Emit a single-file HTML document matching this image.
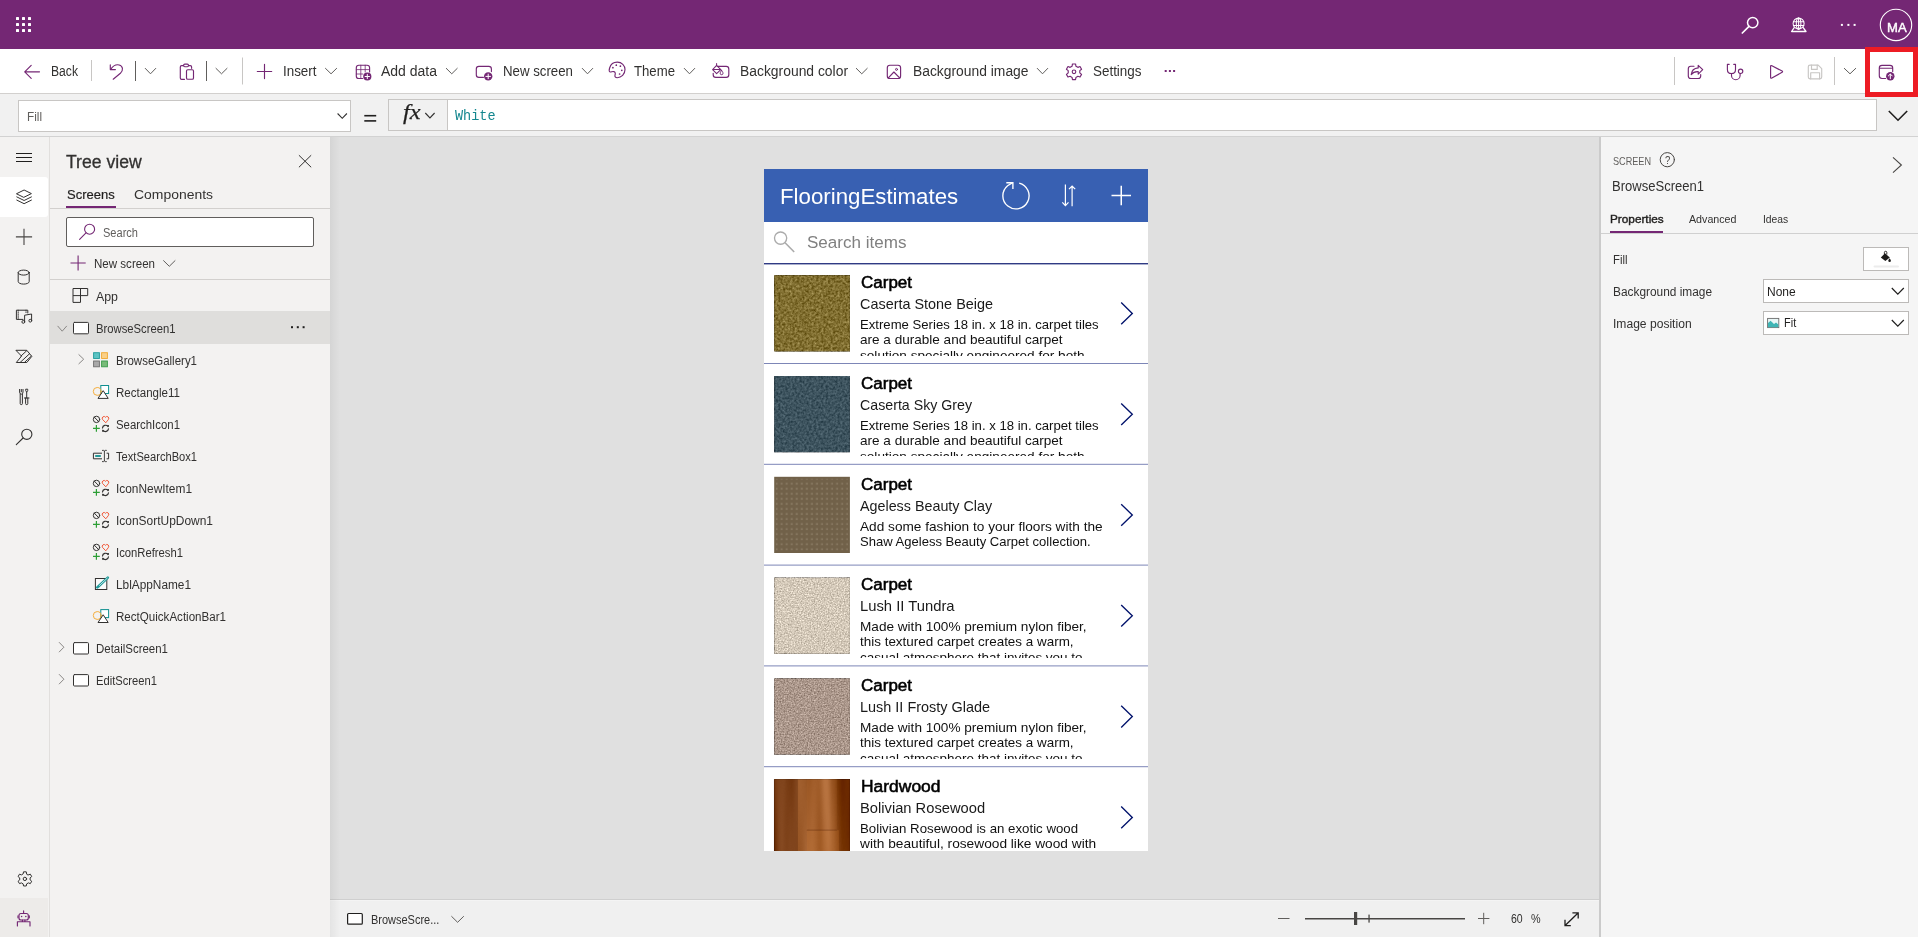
<!DOCTYPE html>
<html><head><meta charset="utf-8"><title>Power Apps</title>
<style>
html,body{margin:0;padding:0;}
body{width:1918px;height:937px;overflow:hidden;position:relative;background:#f3f2f1;font-family:"Liberation Sans",sans-serif;}
.a{position:absolute;}
.t{position:absolute;white-space:pre;transform-origin:0 0;}
svg{position:absolute;overflow:visible;}
.ic{fill:none;stroke:#742774;stroke-width:1.1;stroke-linecap:round;stroke-linejoin:round;}
.dk{fill:none;stroke:#323130;stroke-width:1.1;stroke-linecap:round;stroke-linejoin:round;}
.wh{fill:none;stroke:#fff;stroke-width:1.4;stroke-linecap:round;stroke-linejoin:round;}

</style></head>
<body>
<!-- ===== top purple bar ===== -->
<div class="a" style="left:0;top:0;width:1918px;height:49px;background:#742774"></div>
<!-- ===== command bar ===== -->
<div class="a" style="left:0;top:49px;width:1918px;height:44px;background:#fff"></div>
<div class="a" style="left:0;top:93px;width:1918px;height:1px;background:#d2d0ce"></div>
<!-- ===== formula bar ===== -->
<div class="a" style="left:0;top:94px;width:1918px;height:42px;background:#f1f1f1"></div>
<div class="a" style="left:0;top:136px;width:1918px;height:1px;background:#d2d2d2"></div>
<div class="a" style="left:18px;top:100px;width:331px;height:30px;background:#fff;border:1px solid #c8c6c4"></div>
<div class="a" style="left:388px;top:99px;width:1487px;height:30px;background:#fff;border:1px solid #c8c6c4"></div>
<div class="a" style="left:389px;top:100px;width:58px;height:30px;background:#f1f1f1;border-right:1px solid #c8c6c4"></div>
<!-- ===== left rail ===== -->
<div class="a" style="left:0;top:137px;width:49px;height:800px;background:#f3f2f1"></div>
<div class="a" style="left:49px;top:137px;width:1px;height:800px;background:#e1dfdd"></div>
<div class="a" style="left:0;top:177px;width:48px;height:40px;background:#fff;border-radius:0 3px 3px 0"></div>
<div class="a" style="left:0;top:898px;width:48px;height:39px;background:#edebe9"></div>
<!-- ===== tree view ===== -->
<div class="a" style="left:50px;top:137px;width:280px;height:800px;background:#f3f2f1"></div>
<div class="a" style="left:50px;top:208px;width:280px;height:1px;background:#d2d0ce"></div>
<div class="a" style="left:66px;top:206px;width:50px;height:2px;background:#742774"></div>
<div class="a" style="left:66px;top:217px;width:246px;height:28px;background:#fff;border:1px solid #605e5c;border-radius:2px"></div>
<div class="a" style="left:50px;top:279px;width:280px;height:1px;background:#d2d0ce"></div>
<div class="a" style="left:50px;top:311px;width:280px;height:33px;background:#dfdedc"></div>
<!-- ===== canvas ===== -->
<div class="a" style="left:330px;top:137px;width:1270px;height:762px;background:#e0e0e0"></div>

<div class="a" style="left:330px;top:899px;width:1270px;height:38px;background:#f0f0f0"></div>
<div class="a" style="left:330px;top:899px;width:1270px;height:1px;background:#cfcfcf"></div><div class="a" style="left:330px;top:900px;width:1270px;height:1px;background:#f4f4f4"></div>
<div class="a" style="left:330px;top:137px;width:10px;height:800px;background:linear-gradient(to right,rgba(0,0,0,.05),rgba(0,0,0,0))"></div>
<!-- ===== right panel ===== -->
<div class="a" style="left:1600px;top:137px;width:318px;height:800px;background:#f5f5f5"></div>
<div class="a" style="left:1599px;top:137px;width:2px;height:800px;background:#cbcbcb"></div>
<div class="a" style="left:1601px;top:233px;width:317px;height:1px;background:#d0d0d0"></div>
<div class="a" style="left:1610px;top:231px;width:53px;height:2px;background:#742774"></div>
<div class="a" style="left:1863px;top:247px;width:44px;height:22px;background:#fff;border:1px solid #bcbab8"></div>
<div class="a" style="left:1763px;top:279px;width:144px;height:22px;background:#fff;border:1px solid #bcbab8"></div>
<div class="a" style="left:1763px;top:311px;width:144px;height:22px;background:#fff;border:1px solid #bcbab8"></div>
<!-- ===== red highlight box ===== -->
<div class="a" style="left:1865px;top:47px;width:43px;height:40px;border:5px solid #ed1c24;border-right-width:5px"></div>
<!-- ===== app canvas ===== -->
<div class="a" style="left:764px;top:169px;width:384px;height:682px;background:#fff"></div>
<div class="a" style="left:764px;top:169px;width:384px;height:53px;background:#3860b2"></div>
<svg width="0" height="0" style="left:0;top:0">
<defs>
<filter id="nz1" x="0" y="0" width="100%" height="100%" color-interpolation-filters="sRGB"><feTurbulence type="fractalNoise" baseFrequency="0.42" numOctaves="2" seed="4"/><feColorMatrix type="matrix" values="1 0 0 0 0  1 0 0 0 0  1 0 0 0 0  0 0 0 0 1" result="n"/><feComposite in="SourceGraphic" in2="n" operator="arithmetic" k1="0" k2="1" k3="0.48" k4="-0.24"/></filter>
<filter id="nz2" x="0" y="0" width="100%" height="100%" color-interpolation-filters="sRGB"><feTurbulence type="fractalNoise" baseFrequency="0.42" numOctaves="2" seed="9"/><feColorMatrix type="matrix" values="1 0 0 0 0  1 0 0 0 0  1 0 0 0 0  0 0 0 0 1" result="n"/><feComposite in="SourceGraphic" in2="n" operator="arithmetic" k1="0" k2="1" k3="0.32" k4="-0.16"/></filter>
<filter id="nz4" x="0" y="0" width="100%" height="100%" color-interpolation-filters="sRGB"><feTurbulence type="fractalNoise" baseFrequency="0.7" numOctaves="2" seed="2"/><feColorMatrix type="matrix" values="1 0 0 0 0  1 0 0 0 0  1 0 0 0 0  0 0 0 0 1" result="n"/><feComposite in="SourceGraphic" in2="n" operator="arithmetic" k1="0" k2="1" k3="0.5" k4="-0.25"/></filter>
<filter id="nz6" x="0" y="0" width="100%" height="100%" color-interpolation-filters="sRGB"><feTurbulence type="fractalNoise" baseFrequency="0.06 0.003" numOctaves="2" seed="11"/><feColorMatrix type="matrix" values="1 0 0 0 0  1 0 0 0 0  1 0 0 0 0  0 0 0 0 1" result="n"/><feComposite in="SourceGraphic" in2="n" operator="arithmetic" k1="0" k2="1" k3="0.55" k4="-0.275"/></filter>
<pattern id="dots" x="1.5" y="1.5" width="5.05" height="5.05" patternUnits="userSpaceOnUse"><rect x="1.4" y="1.4" width="2" height="2" fill="#8a7b63" opacity=".8"/></pattern>
</defs></svg>
<svg width="1918" height="937" viewBox="0 0 1918 937" style="left:0;top:0">
<rect x="774.2" y="275.20" width="75.7" height="76.20" fill="#806e30" filter="url(#nz1)"/>
<path d="M1121.2 302.60 L1132.3 313.40 L1121.2 324.20" fill="none" stroke="#00126b" stroke-width="1.35"/>
<rect x="774.2" y="376.00" width="75.7" height="76.20" fill="#3d535e" filter="url(#nz2)"/>
<path d="M1121.2 403.40 L1132.3 414.20 L1121.2 425.00" fill="none" stroke="#00126b" stroke-width="1.35"/>
<rect x="774.2" y="476.80" width="75.7" height="76.20" fill="#716149"/>
<rect x="775.9" y="478.80" width="72" height="72" fill="url(#dots)"/>
<path d="M1121.2 504.20 L1132.3 515.00 L1121.2 525.80" fill="none" stroke="#00126b" stroke-width="1.35"/>
<rect x="774.2" y="577.60" width="75.7" height="76.20" fill="#d4c9b9" filter="url(#nz4)"/>
<path d="M1121.2 605.00 L1132.3 615.80 L1121.2 626.60" fill="none" stroke="#00126b" stroke-width="1.35"/>
<rect x="774.2" y="678.40" width="75.7" height="76.20" fill="#ab978b" filter="url(#nz4)"/>
<path d="M1121.2 705.80 L1132.3 716.60 L1121.2 727.40" fill="none" stroke="#00126b" stroke-width="1.35"/>
<rect x="774.2" y="779.20" width="75.7" height="71.80" fill="#82400f" filter="url(#nz6)"/>
<g transform="translate(773.9 779.20)"><rect x="0" y="0" width="24" height="71.80" fill="#4a1c06" opacity=".30"/><rect x="33" y="0" width="30" height="51" fill="#b8682a" opacity=".18"/><rect x="33" y="51" width="32" height="20.80" fill="#c07030" opacity=".3"/><rect x="33" y="50.5" width="30" height="0.8" fill="#5a2408" opacity=".5"/></g>
<path d="M1121.2 806.60 L1132.3 817.40 L1121.2 828.20" fill="none" stroke="#00126b" stroke-width="1.35"/>
</svg>
<svg width="1918" height="937" viewBox="0 0 1918 937" style="left:0;top:0" fill="none" stroke="#fff" stroke-linecap="butt" stroke-linejoin="miter">
<path d="M1019.2 183.1 A13.1 13.1 0 1 1 1007.6 185.7 L1012.6 182.7" stroke-width="1.35"/><path d="M1006.3 182.7 H1012.9 V189" stroke-width="1.35"/>
<path d="M1065.4 184.5 V205.4 M1062.3 202.4 L1065.4 205.6 L1068.5 202.4" stroke-width="1.2"/><path d="M1072.1 206.2 V186 M1069 189.2 L1072.1 186 L1075.2 189.2" stroke-width="1.2"/>
<path d="M1121.25 185.8 V205.3 M1111.5 195.6 H1131" stroke-width="1.5"/>
</svg>
<svg width="1918" height="937" viewBox="0 0 1918 937" style="left:0;top:0" fill="none"><circle cx="780.6" cy="238.1" r="6.1" stroke="#ababab" stroke-width="1.35"/><path d="M785.1 242.7 L794.2 252" stroke="#ababab" stroke-width="1.6"/><rect x="764" y="263.15" width="384" height="1.2" fill="#0d1a70"/></svg><!-- ===== icon layer (absolute page coordinates) ===== -->
<svg width="1918" height="937" viewBox="0 0 1918 937" style="left:0;top:0" fill="none" stroke-linecap="round" stroke-linejoin="round">
<rect x="16" y="17" width="3" height="3" rx=".6" fill="#fff"/>
<rect x="22" y="17" width="3" height="3" rx=".6" fill="#fff"/>
<rect x="28" y="17" width="3" height="3" rx=".6" fill="#fff"/>
<rect x="16" y="23" width="3" height="3" rx=".6" fill="#fff"/>
<rect x="22" y="23" width="3" height="3" rx=".6" fill="#fff"/>
<rect x="28" y="23" width="3" height="3" rx=".6" fill="#fff"/>
<rect x="16" y="29" width="3" height="3" rx=".6" fill="#fff"/>
<rect x="22" y="29" width="3" height="3" rx=".6" fill="#fff"/>
<rect x="28" y="29" width="3" height="3" rx=".6" fill="#fff"/>
<circle cx="1752.7" cy="22.6" r="5.2" stroke="#fff" stroke-width="1.5"/><path d="M1749 26.4 L1742.3 33" stroke="#fff" stroke-width="1.7"/>
<g stroke="#fff" stroke-width="1.05"><circle cx="1798.6" cy="23.6" r="5.5"/><ellipse cx="1798.6" cy="23.6" rx="2.3" ry="5.5"/><path d="M1793.4 21.7 H1803.8 M1793.4 25.5 H1803.8 M1798.6 18.1 V29.1"/><path d="M1794.2 27.7 L1791.6 31.5 H1806 L1803.2 27.7" stroke-width="1.3"/></g>
<rect x="1840.9" y="23.9" width="2" height="2" fill="#fff"/>
<rect x="1847.4" y="23.9" width="2" height="2" fill="#fff"/>
<rect x="1853.6" y="23.9" width="2" height="2" fill="#fff"/>
<circle cx="1896" cy="24.9" r="15.7" stroke="#fff" stroke-width="1.1"/>
<g stroke="#742774" stroke-width="1.15">
<path d="M39.5 71.8 H24.8 M31.2 65.4 L24.7 71.8 L31.2 78.3"/>
<path d="M110.3 64.9 V69.6 H115.4"/><path d="M110.6 69.4 C112.8 66.2 116 64.2 119.2 65 C123 66 123.6 70.4 120.4 73.2 L113.2 79.2"/>
<path d="M183.4 65.6 H181.6 Q180.3 65.6 180.3 66.9 V78 Q180.3 79.3 181.6 79.3 H184.5 M188.6 65.6 H190.3 Q191.6 65.6 191.6 66.9 V68.3"/><rect x="183.6" y="64.2" width="4.9" height="2.5" rx="1.2"/><rect x="186.5" y="69.7" width="7" height="9.6" rx="1.3"/>
<path d="M264.5 64.3 V78.6 M257.3 71.45 H271.7"/>
<path d="M369.6 72 V67.8 Q369.6 65.2 367 65.2 H358.9 Q356.3 65.2 356.3 67.8 V75.9 Q356.3 78.5 358.9 78.5 H362.6"/><path d="M356.3 69.6 H369.6 M356.3 74 H362.8 M360.8 65.2 V78.5 M365.2 65.2 V72" stroke-width=".8"/>
<circle cx="367.3" cy="76.5" r="4.1" fill="#742774" stroke="none"/><path d="M367.3 74.3 V78.7 M365.1 76.5 H369.5" stroke="#fff" stroke-width="1"/>
<path d="M483.4 77.4 H478.9 Q476.3 77.4 476.3 74.8 V68.9 Q476.3 66.3 478.9 66.3 H488.8 Q491.4 66.3 491.4 68.9 V71.6"/>
<circle cx="488.2" cy="76.4" r="4.2" fill="#742774" stroke="none"/><path d="M488.2 74.1 V78.7 M485.9 76.4 H490.5" stroke="#fff" stroke-width="1"/>
<path d="M617.3 62.1 C621.8 62.1 625 65.6 625 69.6 C625 74.4 621.3 77.7 617.2 77.7 C615.3 77.7 614.6 76.4 615 75.2 C615.6 73.4 615.3 72 613.8 71.6 C612.3 71.2 611.2 72.3 610.2 72 C609 71.6 609.2 69.3 609.6 68 C610.6 64.6 613.6 62.1 617.3 62.1 Z"/>
<circle cx="612.9" cy="67.7" r=".85" fill="#742774" stroke="none"/>
<circle cx="616.3" cy="65.2" r=".85" fill="#742774" stroke="none"/>
<circle cx="620.4" cy="66.2" r=".85" fill="#742774" stroke="none"/>
<circle cx="621.8" cy="70.3" r=".85" fill="#742774" stroke="none"/>
<circle cx="619.6" cy="74" r=".85" fill="#742774" stroke="none"/>
<path d="M717.5 66.3 H726.2 Q728.8 66.3 728.8 68.9 V74.8 Q728.8 77.4 726.2 77.4 H715.8 Q713.2 77.4 713.2 74.8 V73.2"/>
<path d="M716.6 63.4 V66 M712.6 69.6 L716.6 65.3 L720.8 69.6 L716.6 73.6 Z M712.8 69.4 H720.6" stroke-width="1.05"/><path d="M721.6 70.4 C722.8 72 723 72.7 723 73.3 A1.4 1.4 0 0 1 720.2 73.3 C720.2 72.7 720.5 72 721.6 70.4 Z" stroke-width="1"/>
<rect x="887.3" y="65.2" width="13.3" height="13.3" rx="2.6"/><path d="M888.6 77.6 L893.9 72 L899.4 77.6"/><circle cx="896.5" cy="69.4" r="1" stroke-width="1"/>
</g>
<path d="M1075.92 66.22 L1075.53 63.95 L1072.47 63.95 L1072.08 66.22 L1070.13 67.35 L1067.96 66.55 L1066.44 69.20 L1068.21 70.67 L1068.21 72.93 L1066.44 74.40 L1067.96 77.05 L1070.13 76.25 L1072.08 77.38 L1072.47 79.65 L1075.53 79.65 L1075.92 77.38 L1077.87 76.25 L1080.04 77.05 L1081.56 74.40 L1079.79 72.93 L1079.79 70.67 L1081.56 69.20 L1080.04 66.55 L1077.87 67.35 Z" stroke="#742774" stroke-width="1.15"/><circle cx="1074" cy="71.8" r="1.8" stroke="#742774" stroke-width="1.15"/>
<rect x="1164.7" y="70" width="2" height="2" fill="#742774"/>
<rect x="1168.9" y="70" width="2" height="2" fill="#742774"/>
<rect x="1173.1" y="70" width="2" height="2" fill="#742774"/>
<g stroke="#742774" stroke-width="1.15">
<path d="M1694 66.2 H1690.8 Q1688.3 66.2 1688.3 68.7 V76 Q1688.3 78.5 1690.8 78.5 H1698.2 Q1700.7 78.5 1700.7 76 V74.6"/><path d="M1698.2 65.4 L1702.7 69.7 L1698.2 74.1 V71.6 C1695 71.4 1692.8 72.4 1691.2 74.6 C1691.6 70.8 1694 68.2 1698.2 67.9 Z"/>
<path d="M1729.2 64.3 H1727.4 V69.4 Q1727.4 73.5 1731.5 73.5 Q1735.5 73.5 1735.5 69.4 V64.3 H1733.7"/><path d="M1731.5 73.5 V75.4 A4.3 4.3 0 0 0 1740.1 75.4 V73.6"/><circle cx="1740.6" cy="71.3" r="2.2"/>
<path d="M1770.6 66.3 Q1770.6 65 1771.9 65.7 L1782.1 71.1 Q1783.1 71.7 1782.1 72.3 L1771.9 78 Q1770.6 78.7 1770.6 77.4 Z"/>
</g>
<g stroke="#c8c6c4" stroke-width="1.15"><path d="M1810 65.1 H1818.2 L1821.7 68.6 V77.1 Q1821.7 78.8 1820 78.8 H1810 Q1808.3 78.8 1808.3 77.1 V66.8 Q1808.3 65.1 1810 65.1 Z"/><path d="M1811.5 65.1 V69.4 H1817.2 V65.1 M1810.7 78.8 V72.7 H1819.6 V78.8"/></g>
<g stroke="#742774" stroke-width="1.15"><path d="M1885.6 78.5 H1882 Q1879.3 78.5 1879.3 75.8 V68 Q1879.3 65.3 1882 65.3 H1890 Q1892.7 65.3 1892.7 68 V71.4 M1879.3 68.2 H1892.7"/></g>
<circle cx="1890.3" cy="76.3" r="4.2" fill="#742774"/><path d="M1890.3 78.7 V74.2 M1888.3 76 L1890.3 74 L1892.3 76" stroke="#fff" stroke-width="1"/>
<path d="M91.5 60 V81" stroke="#c8c6c4" stroke-width="1" stroke-linecap="butt"/>
<path d="M135.5 61 V81" stroke="#605e5c" stroke-width="1" stroke-linecap="butt"/>
<path d="M206.5 61 V81" stroke="#605e5c" stroke-width="1" stroke-linecap="butt"/>
<path d="M242.5 57.5 V84.5" stroke="#c8c6c4" stroke-width="1" stroke-linecap="butt"/>
<path d="M1674.5 57 V85" stroke="#c8c6c4" stroke-width="1" stroke-linecap="butt"/>
<path d="M1834.5 57 V85" stroke="#c8c6c4" stroke-width="1" stroke-linecap="butt"/>
<path d="M145 68.1 L150.5 73.8 L156 68.1" stroke="#605e5c" stroke-width="1.0" stroke-linecap="butt" stroke-linejoin="miter"/>
<path d="M215.7 68.1 L221.5 73.8 L227.3 68.1" stroke="#605e5c" stroke-width="1.0" stroke-linecap="butt" stroke-linejoin="miter"/>
<path d="M325.2 68.1 L331.04999999999995 73.8 L336.9 68.1" stroke="#605e5c" stroke-width="1.0" stroke-linecap="butt" stroke-linejoin="miter"/>
<path d="M446 68.1 L451.75 73.8 L457.5 68.1" stroke="#605e5c" stroke-width="1.0" stroke-linecap="butt" stroke-linejoin="miter"/>
<path d="M582 68.1 L587.5 73.8 L593 68.1" stroke="#605e5c" stroke-width="1.0" stroke-linecap="butt" stroke-linejoin="miter"/>
<path d="M684 68.1 L689.5 73.8 L695 68.1" stroke="#605e5c" stroke-width="1.0" stroke-linecap="butt" stroke-linejoin="miter"/>
<path d="M856 68.1 L861.75 73.8 L867.5 68.1" stroke="#605e5c" stroke-width="1.0" stroke-linecap="butt" stroke-linejoin="miter"/>
<path d="M1037 68.1 L1042.5 73.8 L1048 68.1" stroke="#605e5c" stroke-width="1.0" stroke-linecap="butt" stroke-linejoin="miter"/>
<path d="M1844 68.1 L1850.0 73.8 L1856 68.1" stroke="#605e5c" stroke-width="1.0" stroke-linecap="butt" stroke-linejoin="miter"/>
<path d="M337.6 113.5 L342.25 118.3 L346.9 113.5" stroke="#323130" stroke-width="1.1" stroke-linecap="butt" stroke-linejoin="miter"/>
<rect x="364.3" y="114.9" width="11.9" height="1.6" fill="#201f1e"/><rect x="364.3" y="120.1" width="11.9" height="1.6" fill="#201f1e"/>
<path d="M425.3 113 L429.95000000000005 117.9 L434.6 113" stroke="#323130" stroke-width="1.1" stroke-linecap="butt" stroke-linejoin="miter"/>
<path d="M1888.8 111 L1898.0 120.2 L1907.2 111" stroke="#201f1e" stroke-width="1.6" stroke-linecap="butt" stroke-linejoin="miter"/>
<g stroke="#201f1e" stroke-width="1" stroke-linecap="butt"><path d="M16 153.5 H32 M16 157.5 H32 M16 161.5 H32"/></g>
<g stroke="#323130" stroke-width="1"><path d="M16.8 193.6 L24.1 190 L31.4 193.6 L24.1 197.2 Z M16.8 196.9 L24.1 200.5 L31.4 196.9 M16.8 200.1 L24.1 203.7 L31.4 200.1"/></g>
<path d="M24 228.8 V245 M15.9 236.9 H32.1" stroke="#484644" stroke-width="1.1" stroke-linecap="butt"/>
<g stroke="#323130" stroke-width="1"><ellipse cx="23.7" cy="272.6" rx="5.5" ry="2.5"/><path d="M18.2 272.6 V281.6 A5.5 2.5 0 0 0 29.2 281.6 V272.6"/></g>
<g stroke="#323130" stroke-width="1"><path d="M23 319.4 H16.4 V310.2 H27.8 V313"/><path d="M18.2 310.2 V319.4 M26 310.2 V312.6" stroke-dasharray="1 1.1" stroke-width=".9"/><path d="M24.6 321.6 V315.2 L31.6 314 V320.4"/><circle cx="23.3" cy="321.9" r="1.4"/><circle cx="30.3" cy="320.7" r="1.4"/></g>
<g stroke="#323130" stroke-width="1"><path d="M16.3 350.3 H26.8 L31.8 356.4 L26.8 362.5 H16.3 L21.3 356.4 Z"/><path d="M20.3 362.3 L29.7 353.6 M24.6 362.3 L31.2 356.2 M21 356 L26.6 350.8"/></g>
<g stroke="#323130" stroke-width="1"><path d="M20.2 394.2 V403.6 Q20.2 404.6 21.3 404.6 Q22.4 404.6 22.4 403.6 V394.2"/><path d="M19.6 389.4 V392 Q19.6 394.2 21.3 394.2 Q23 394.2 23 392 V389.4 M21.3 389.4 V391.8"/><path d="M25.6 398 V403.6 Q25.6 404.6 26.7 404.6 Q27.8 404.6 27.8 403.6 V398 M24.4 398 H29 M26.7 398 V392.2 L25.7 390.6 V389.2 H27.7 V390.6 L26.7 392.2"/></g>
<circle cx="26.8" cy="434.3" r="5.1" stroke="#323130" stroke-width="1.1"/><path d="M23.1 438 L16.3 444.7" stroke="#323130" stroke-width="1.1"/>
<path d="M26.63 873.89 L26.27 871.83 L23.53 871.83 L23.17 873.89 L21.42 874.90 L19.47 874.18 L18.09 876.56 L19.70 877.89 L19.70 879.91 L18.09 881.24 L19.47 883.62 L21.42 882.90 L23.17 883.91 L23.53 885.97 L26.27 885.97 L26.63 883.91 L28.38 882.90 L30.33 883.62 L31.71 881.24 L30.10 879.91 L30.10 877.89 L31.71 876.56 L30.33 874.18 L28.38 874.90 Z" stroke="#323130" stroke-width="1.0"/><circle cx="24.9" cy="878.9" r="1.7" stroke="#323130" stroke-width="1.0"/>
<g stroke="#742774" stroke-width="1.15"><path d="M23.6 910.9 V913.4"/><rect x="19" y="913.5" width="9.3" height="6.5" rx="2"/><path d="M18 915.8 V917.8 M29.3 915.8 V917.8 M22.4 920 V921.6 M24.9 920 V921.6 M17.4 926 V921.7 H30 V926"/></g><circle cx="21.6" cy="916.6" r=".75" fill="#742774"/><circle cx="25.8" cy="916.6" r=".75" fill="#742774"/>
<path d="M299.2 155.5 L310.9 167 M310.9 155.5 L299.2 167" stroke="#323130" stroke-width="1.0"/>
<circle cx="89.6" cy="229.2" r="5" stroke="#742774" stroke-width="1.1"/><path d="M86 232.9 L79.6 239.4" stroke="#742774" stroke-width="1.1"/>
<path d="M78.1 255.4 V270.6 M70.5 263 H85.7" stroke="#742774" stroke-width="1.1" stroke-linecap="butt"/>
<path d="M163.3 260.4 L169.3 266.3 L175.3 260.4" stroke="#605e5c" stroke-width="1.0" stroke-linecap="butt" stroke-linejoin="miter"/>
<path d="M73.4 288.5 H87.7 V295.6 H80.5 V302.4 H73.4 Z M80.5 288.5 V295.6 M73.4 295.6 H80.5" stroke="#323130" stroke-width="1" stroke-linejoin="miter"/>
<rect x="73.5" y="322.4" width="15" height="11.4" rx="1" fill="#fff" stroke="#323130" stroke-width="1"/>
<path d="M57.6 325.9 L62.2 331.2 L66.8 325.9" stroke="#8a8886" stroke-width="1.0" stroke-linecap="butt" stroke-linejoin="miter"/>
<rect x="73.5" y="642.6" width="15" height="11.4" rx="1" fill="#fff" stroke="#323130" stroke-width="1"/>
<path d="M59 642.2 L63.9 647.2 L59 652.2" stroke="#8a8886" stroke-width="1" stroke-linecap="butt" stroke-linejoin="miter"/>
<rect x="73.5" y="674.6" width="15" height="11.4" rx="1" fill="#fff" stroke="#323130" stroke-width="1"/>
<path d="M59 674.2 L63.9 679.2 L59 684.2" stroke="#8a8886" stroke-width="1" stroke-linecap="butt" stroke-linejoin="miter"/>
<rect x="291" y="326.2" width="2" height="2" fill="#201f1e"/>
<rect x="296.8" y="326.2" width="2" height="2" fill="#201f1e"/>
<rect x="302.6" y="326.2" width="2" height="2" fill="#201f1e"/>
<path d="M78.6 354.4 L83.7 359.2 L78.6 364" stroke="#8a8886" stroke-width="1" stroke-linecap="butt" stroke-linejoin="miter"/>
<rect x="93.6" y="352.7" width="5.8" height="5.8" fill="#5cc3c3" stroke="#1f9a9a" stroke-width=".9" stroke-linejoin="miter"/>
<rect x="101.6" y="352.7" width="5.8" height="5.8" fill="#fad088" stroke="#efa72f" stroke-width=".9" stroke-linejoin="miter"/>
<rect x="93.6" y="361" width="5.8" height="5.8" fill="#a9a9a9" stroke="#6f6f6f" stroke-width=".9" stroke-linejoin="miter"/>
<rect x="101.6" y="361" width="5.8" height="5.8" fill="#79bb79" stroke="#3a9a4a" stroke-width=".9" stroke-linejoin="miter"/>
<rect x="100.8" y="385.5" width="7.8" height="8" fill="#fff" stroke="#0f8f8f" stroke-width="1" stroke-linejoin="miter"/>
<circle cx="97.2" cy="391.4" r="3.9" stroke="#f4ae3d" stroke-width="1"/>
<path d="M103.4 391 L108.2 398.4 H98.4 Z" fill="#fff" stroke="#323130" stroke-width="1" stroke-linejoin="miter"/>
<rect x="100.8" y="609.6" width="7.8" height="8" fill="#fff" stroke="#0f8f8f" stroke-width="1" stroke-linejoin="miter"/>
<circle cx="97.2" cy="615.5" r="3.9" stroke="#f4ae3d" stroke-width="1"/>
<path d="M103.4 615.1 L108.2 622.5 H98.4 Z" fill="#fff" stroke="#323130" stroke-width="1" stroke-linejoin="miter"/>
<circle cx="96.5" cy="419.4" r="3.2" stroke="#323130" stroke-width="1"/><path d="M94.3 417.1 L98.7 421.7" stroke="#323130" stroke-width="1"/>
<path d="M105.5 422.5 L102.5 419.4 A1.65 1.65 0 0 1 105.5 417.3 A1.65 1.65 0 0 1 108.5 419.4 Z" stroke="#f1593a" stroke-width="1" stroke-linejoin="miter"/>
<path d="M96.4 425 V431.8 M93 428.4 H99.8" stroke="#2c9e35" stroke-width="1.2" stroke-linecap="butt"/>
<path d="M102.5 428.0 A3 3 0 0 1 107.9 426.5 M108.5 428.79999999999995 A3 3 0 0 1 103.1 430.29999999999995" stroke="#323130" stroke-width="1.2"/><path d="M106.7 425.0 H108.9 V427.2 Z M104.3 431.79999999999995 H102.1 V429.59999999999997 Z" fill="#323130" stroke="none"/>
<circle cx="96.5" cy="483.4" r="3.2" stroke="#323130" stroke-width="1"/><path d="M94.3 481.1 L98.7 485.7" stroke="#323130" stroke-width="1"/>
<path d="M105.5 486.5 L102.5 483.4 A1.65 1.65 0 0 1 105.5 481.3 A1.65 1.65 0 0 1 108.5 483.4 Z" stroke="#f1593a" stroke-width="1" stroke-linejoin="miter"/>
<path d="M96.4 489 V495.8 M93 492.4 H99.8" stroke="#2c9e35" stroke-width="1.2" stroke-linecap="butt"/>
<path d="M102.5 492.0 A3 3 0 0 1 107.9 490.5 M108.5 492.79999999999995 A3 3 0 0 1 103.1 494.29999999999995" stroke="#323130" stroke-width="1.2"/><path d="M106.7 489.0 H108.9 V491.2 Z M104.3 495.79999999999995 H102.1 V493.59999999999997 Z" fill="#323130" stroke="none"/>
<circle cx="96.5" cy="515.4" r="3.2" stroke="#323130" stroke-width="1"/><path d="M94.3 513.1 L98.7 517.7" stroke="#323130" stroke-width="1"/>
<path d="M105.5 518.5 L102.5 515.4000000000001 A1.65 1.65 0 0 1 105.5 513.3000000000001 A1.65 1.65 0 0 1 108.5 515.4000000000001 Z" stroke="#f1593a" stroke-width="1" stroke-linejoin="miter"/>
<path d="M96.4 521 V527.8 M93 524.4 H99.8" stroke="#2c9e35" stroke-width="1.2" stroke-linecap="butt"/>
<path d="M102.5 524.0 A3 3 0 0 1 107.9 522.5 M108.5 524.8 A3 3 0 0 1 103.1 526.3" stroke="#323130" stroke-width="1.2"/><path d="M106.7 521.0 H108.9 V523.1999999999999 Z M104.3 527.8 H102.1 V525.6 Z" fill="#323130" stroke="none"/>
<circle cx="96.5" cy="547.4" r="3.2" stroke="#323130" stroke-width="1"/><path d="M94.3 545.1 L98.7 549.7" stroke="#323130" stroke-width="1"/>
<path d="M105.5 550.5 L102.5 547.4000000000001 A1.65 1.65 0 0 1 105.5 545.3000000000001 A1.65 1.65 0 0 1 108.5 547.4000000000001 Z" stroke="#f1593a" stroke-width="1" stroke-linejoin="miter"/>
<path d="M96.4 553 V559.8 M93 556.4 H99.8" stroke="#2c9e35" stroke-width="1.2" stroke-linecap="butt"/>
<path d="M102.5 556.0 A3 3 0 0 1 107.9 554.5 M108.5 556.8 A3 3 0 0 1 103.1 558.3" stroke="#323130" stroke-width="1.2"/><path d="M106.7 553.0 H108.9 V555.1999999999999 Z M104.3 559.8 H102.1 V557.6 Z" fill="#323130" stroke="none"/>
<path d="M102 453.2 H93.4 V458.8 H102 M106.6 453.2 H108.6 V458.8 H106.6" stroke="#323130" stroke-width="1" stroke-linejoin="miter" stroke-linecap="butt"/><rect x="95.2" y="455.1" width="5.6" height="1.8" fill="#0f8f8f"/><path d="M102.4 450.4 H103.6 Q104.4 450.6 104.4 451.4 V460.6 Q104.4 461.4 103.6 461.6 H102.4 M106.4 450.4 H105.2 Q104.4 450.6 104.4 451.4 M106.4 461.6 H105.2 Q104.4 461.4 104.4 460.6" stroke="#323130" stroke-width=".9"/>
<rect x="95.4" y="578.5" width="11.4" height="11" fill="#fafafa" stroke="#323130" stroke-width="1" stroke-linejoin="miter"/><path d="M107.8 577.6 L98.6 586.2 L97.3 587.4" stroke="#1f9a9a" stroke-width="2.6" stroke-linecap="round"/><path d="M107.2 578.2 L99.4 585.5" stroke="#fff" stroke-width=".7"/>
<circle cx="1667.3" cy="159.7" r="7.1" stroke="#484644" stroke-width="1"/>
<path d="M1893 157.4 L1901.4 165 L1893 172.6" stroke="#484644" stroke-width="1.1" stroke-linecap="butt" stroke-linejoin="miter"/>
<path d="M1891.8 288 L1897.8 294.2 L1903.8 288" stroke="#201f1e" stroke-width="1.2" stroke-linecap="butt" stroke-linejoin="miter"/>
<path d="M1891.8 320 L1897.8 326.2 L1903.8 320" stroke="#201f1e" stroke-width="1.2" stroke-linecap="butt" stroke-linejoin="miter"/>
<path d="M1885 253.3 L1880.8 257.6 L1885.4 261 L1889.8 257.5 Z" fill="#1b1a19"/><path d="M1884.4 254.2 V252.4 Q1884.4 251.3 1885.6 251.3 Q1886.8 251.3 1886.8 252.4 V254.2" stroke="#1b1a19" stroke-width=".9"/><path d="M1889.6 258.2 C1890.6 259.6 1890.9 260.2 1890.9 260.8 A1.3 1.3 0 0 1 1888.3 260.8 C1888.3 260.2 1888.6 259.6 1889.6 258.2 Z" fill="#1b1a19"/><path d="M1874.5 266.6 H1898" stroke="#ececec" stroke-width="2" stroke-linecap="round"/>
<rect x="1767.6" y="318.4" width="11.2" height="9.2" fill="#e8f6f6" stroke="#6b6b6b" stroke-width=".9" stroke-linejoin="miter"/><path d="M1768 327.2 V323 L1770.6 320.8 L1774 324 L1776 322.6 L1778.4 324.6 V327.2 Z" fill="#3fb5b5"/>
<rect x="347.6" y="913.5" width="14.7" height="10.7" rx="1" fill="#fff" stroke="#201f1e" stroke-width="1.2"/>
<path d="M451.4 916.2 L457.6 922.3 L463.8 916.2" stroke="#605e5c" stroke-width="1.0" stroke-linecap="butt" stroke-linejoin="miter"/>
<path d="M1278 918.5 H1289.5" stroke="#605e5c" stroke-width="1" stroke-linecap="butt"/>
<path d="M1305 918.7 H1465" stroke="#484644" stroke-width="1.4" stroke-linecap="butt"/>
<rect x="1354" y="912" width="3.2" height="13" fill="#484644"/><rect x="1368.4" y="914.6" width="1.3" height="8" fill="#484644"/>
<path d="M1478 918.5 H1489.4 M1483.7 912.8 V924.2" stroke="#605e5c" stroke-width="1" stroke-linecap="butt"/>
<path d="M1565.4 925.2 L1577.8 913.2 M1572.4 912.9 H1578.2 V918.6 M1565 919.8 V925.6 H1570.8" stroke="#201f1e" stroke-width="1.3" stroke-linejoin="miter" stroke-linecap="butt"/>
</svg>
<!-- text layer -->
<span class="t" style="left:51.0px;top:64.15px;font:14px/1 'Liberation Sans', sans-serif;transform:scaleX(0.8675);color:#323130">Back</span>
<span class="t" style="left:283.0px;top:64.15px;font:14px/1 'Liberation Sans', sans-serif;transform:scaleX(0.9567);color:#323130">Insert</span>
<span class="t" style="left:381.0px;top:64.15px;font:14px/1 'Liberation Sans', sans-serif;transform:scaleX(0.9989);color:#323130">Add data</span>
<span class="t" style="left:502.5px;top:64.15px;font:14px/1 'Liberation Sans', sans-serif;transform:scaleX(0.9469);color:#323130">New screen</span>
<span class="t" style="left:634.0px;top:64.15px;font:14px/1 'Liberation Sans', sans-serif;transform:scaleX(0.9408);color:#323130">Theme</span>
<span class="t" style="left:739.5px;top:64.15px;font:14px/1 'Liberation Sans', sans-serif;transform:scaleX(0.9913);color:#323130">Background color</span>
<span class="t" style="left:912.5px;top:64.15px;font:14px/1 'Liberation Sans', sans-serif;transform:scaleX(0.9893);color:#323130">Background image</span>
<span class="t" style="left:1092.5px;top:64.15px;font:14px/1 'Liberation Sans', sans-serif;transform:scaleX(0.9586);color:#323130">Settings</span>
<span class="t" style="left:27.2px;top:110.00px;font:13px/1 'Liberation Sans', sans-serif;transform:scaleX(0.9031);color:#605e5c">Fill</span>
<span class="t" style="left:454.5px;top:108.75px;font:14px/1 'Liberation Mono', monospace;transform:scaleX(0.9663);color:#14878f">White</span>
<span class="t" style="left:403.2px;top:101.65px;font:20.5px/1 'Liberation Serif', serif;transform:scaleX(1.1894);color:#201f1e;font-style:italic;-webkit-text-stroke:.25px #201f1e">fx</span>
<span class="t" style="left:66.3px;top:152.76px;font:18px/1 'Liberation Sans', sans-serif;transform:scaleX(0.9785);color:#323130;-webkit-text-stroke:.3px #323130">Tree view</span>
<span class="t" style="left:67.0px;top:187.97px;font:13.5px/1 'Liberation Sans', sans-serif;transform:scaleX(0.9630);color:#201f1e;-webkit-text-stroke:.2px #201f1e">Screens</span>
<span class="t" style="left:134.0px;top:187.97px;font:13.5px/1 'Liberation Sans', sans-serif;transform:scaleX(1.0320);color:#323130">Components</span>
<span class="t" style="left:103.0px;top:226.64px;font:12px/1 'Liberation Sans', sans-serif;transform:scaleX(0.9203);color:#605e5c">Search</span>
<span class="t" style="left:94.0px;top:257.84px;font:12px/1 'Liberation Sans', sans-serif;transform:scaleX(0.9628);color:#323130">New screen</span>
<span class="t" style="left:96.0px;top:290.84px;font:12px/1 'Liberation Sans', sans-serif;transform:scaleX(1.0300);color:#323130">App</span>
<span class="t" style="left:96.0px;top:322.84px;font:12px/1 'Liberation Sans', sans-serif;transform:scaleX(0.9384);color:#323130">BrowseScreen1</span>
<span class="t" style="left:116.0px;top:354.84px;font:12px/1 'Liberation Sans', sans-serif;transform:scaleX(0.9563);color:#323130">BrowseGallery1</span>
<span class="t" style="left:116.0px;top:386.84px;font:12px/1 'Liberation Sans', sans-serif;transform:scaleX(0.9624);color:#323130">Rectangle11</span>
<span class="t" style="left:116.0px;top:418.84px;font:12px/1 'Liberation Sans', sans-serif;transform:scaleX(0.9497);color:#323130">SearchIcon1</span>
<span class="t" style="left:116.0px;top:450.84px;font:12px/1 'Liberation Sans', sans-serif;transform:scaleX(0.9269);color:#323130">TextSearchBox1</span>
<span class="t" style="left:116.0px;top:482.84px;font:12px/1 'Liberation Sans', sans-serif;transform:scaleX(0.9908);color:#323130">IconNewItem1</span>
<span class="t" style="left:116.0px;top:514.84px;font:12px/1 'Liberation Sans', sans-serif;transform:scaleX(0.9960);color:#323130">IconSortUpDown1</span>
<span class="t" style="left:116.0px;top:546.84px;font:12px/1 'Liberation Sans', sans-serif;transform:scaleX(0.9387);color:#323130">IconRefresh1</span>
<span class="t" style="left:116.0px;top:578.84px;font:12px/1 'Liberation Sans', sans-serif;transform:scaleX(0.9860);color:#323130">LblAppName1</span>
<span class="t" style="left:116.0px;top:610.84px;font:12px/1 'Liberation Sans', sans-serif;transform:scaleX(0.9645);color:#323130">RectQuickActionBar1</span>
<span class="t" style="left:96.0px;top:642.84px;font:12px/1 'Liberation Sans', sans-serif;transform:scaleX(0.9552);color:#323130">DetailScreen1</span>
<span class="t" style="left:96.0px;top:674.84px;font:12px/1 'Liberation Sans', sans-serif;transform:scaleX(0.9331);color:#323130">EditScreen1</span>
<span class="t" style="left:1613.0px;top:155.69px;font:11px/1 'Liberation Sans', sans-serif;transform:scaleX(0.8289);color:#605e5c">SCREEN</span>
<span class="t" style="left:1664.7px;top:154.81px;font:10.5px/1 'Liberation Sans', sans-serif;transform:scaleX(0.9070);color:#484644">?</span>
<span class="t" style="left:1612.3px;top:179.45px;font:14px/1 'Liberation Sans', sans-serif;transform:scaleX(0.9309);color:#323130">BrowseScreen1</span>
<span class="t" style="left:1610.0px;top:213.52px;font:11.2px/1 'Liberation Sans', sans-serif;transform:scaleX(1.0529);color:#201f1e;-webkit-text-stroke:.4px #201f1e">Properties</span>
<span class="t" style="left:1689.0px;top:213.52px;font:11.2px/1 'Liberation Sans', sans-serif;transform:scaleX(0.9545);color:#323130">Advanced</span>
<span class="t" style="left:1763.2px;top:213.52px;font:11.2px/1 'Liberation Sans', sans-serif;transform:scaleX(0.9205);color:#323130">Ideas</span>
<span class="t" style="left:1613.0px;top:253.84px;font:12px/1 'Liberation Sans', sans-serif;transform:scaleX(0.9460);color:#323130">Fill</span>
<span class="t" style="left:1613.0px;top:286.14px;font:12px/1 'Liberation Sans', sans-serif;transform:scaleX(0.9894);color:#323130">Background image</span>
<span class="t" style="left:1613.0px;top:317.84px;font:12px/1 'Liberation Sans', sans-serif;transform:scaleX(1.0071);color:#323130">Image position</span>
<span class="t" style="left:1767.2px;top:286.14px;font:12px/1 'Liberation Sans', sans-serif;transform:scaleX(1.0004);color:#201f1e">None</span>
<span class="t" style="left:1784.4px;top:316.84px;font:12px/1 'Liberation Sans', sans-serif;transform:scaleX(0.9143);color:#201f1e">Fit</span>
<span class="t" style="left:371.0px;top:913.84px;font:12px/1 'Liberation Sans', sans-serif;transform:scaleX(0.9143);color:#323130">BrowseScre...</span>
<span class="t" style="left:1511.1px;top:912.94px;font:12px/1 'Liberation Sans', sans-serif;transform:scaleX(0.8758);color:#323130">60</span>
<span class="t" style="left:1530.9px;top:912.94px;font:12px/1 'Liberation Sans', sans-serif;transform:scaleX(0.8996);color:#323130">%</span>
<span class="t" style="left:1886.6px;top:21.84px;font:12px/1 'Liberation Sans', sans-serif;transform:scaleX(1.0889);color:#fff;-webkit-text-stroke:.4px #fff">MA</span>
<span class="t" style="left:780.0px;top:185.87px;font:22.6px/1 'Liberation Sans', sans-serif;transform:scaleX(0.9855);color:#fff">FlooringEstimates</span>
<span class="t" style="left:806.5px;top:233.94px;font:17.2px/1 'Liberation Sans', sans-serif;transform:scaleX(0.9921);color:#808080">Search items</span>
<span class="t" style="left:860.5px;top:274.66px;font:16.7px/1 'Liberation Sans', sans-serif;transform:scaleX(1.0181);color:#000;-webkit-text-stroke:.55px #000">Carpet</span>
<span class="t" style="left:860.4px;top:296.50px;font:14.3px/1 'Liberation Sans', sans-serif;transform:scaleX(1.0081);color:#1a1a1a">Caserta Stone Beige</span>
<span class="t" style="left:860.4px;top:319.10px;font:12.4px/1 'Liberation Sans', sans-serif;transform:scaleX(1.0599);color:#111">Extreme Series 18 in. x 18 in. carpet tiles</span>
<span class="t" style="left:860.4px;top:333.95px;font:12.4px/1 'Liberation Sans', sans-serif;transform:scaleX(1.0933);color:#111">are a durable and beautiful carpet</span>
<span class="t" style="left:860.4px;top:349.80px;font:12.4px/1 'Liberation Sans', sans-serif;transform:scaleX(1.0978);color:#111">solution specially engineered for both</span>
<span class="t" style="left:860.5px;top:375.66px;font:16.7px/1 'Liberation Sans', sans-serif;transform:scaleX(1.0181);color:#000;-webkit-text-stroke:.55px #000">Carpet</span>
<span class="t" style="left:860.4px;top:397.50px;font:14.3px/1 'Liberation Sans', sans-serif;transform:scaleX(0.9935);color:#1a1a1a">Caserta Sky Grey</span>
<span class="t" style="left:860.4px;top:420.10px;font:12.4px/1 'Liberation Sans', sans-serif;transform:scaleX(1.0599);color:#111">Extreme Series 18 in. x 18 in. carpet tiles</span>
<span class="t" style="left:860.4px;top:434.95px;font:12.4px/1 'Liberation Sans', sans-serif;transform:scaleX(1.0933);color:#111">are a durable and beautiful carpet</span>
<span class="t" style="left:860.4px;top:450.80px;font:12.4px/1 'Liberation Sans', sans-serif;transform:scaleX(1.0978);color:#111">solution specially engineered for both</span>
<span class="t" style="left:860.5px;top:476.66px;font:16.7px/1 'Liberation Sans', sans-serif;transform:scaleX(1.0181);color:#000;-webkit-text-stroke:.55px #000">Carpet</span>
<span class="t" style="left:860.4px;top:498.50px;font:14.3px/1 'Liberation Sans', sans-serif;transform:scaleX(1.0014);color:#1a1a1a">Ageless Beauty Clay</span>
<span class="t" style="left:860.4px;top:521.10px;font:12.4px/1 'Liberation Sans', sans-serif;transform:scaleX(1.1007);color:#111">Add some fashion to your floors with the</span>
<span class="t" style="left:860.4px;top:535.95px;font:12.4px/1 'Liberation Sans', sans-serif;transform:scaleX(1.0528);color:#111">Shaw Ageless Beauty Carpet collection.</span>
<span class="t" style="left:860.5px;top:576.66px;font:16.7px/1 'Liberation Sans', sans-serif;transform:scaleX(1.0181);color:#000;-webkit-text-stroke:.55px #000">Carpet</span>
<span class="t" style="left:860.4px;top:598.50px;font:14.3px/1 'Liberation Sans', sans-serif;transform:scaleX(1.0349);color:#1a1a1a">Lush II Tundra</span>
<span class="t" style="left:860.4px;top:621.10px;font:12.4px/1 'Liberation Sans', sans-serif;transform:scaleX(1.0967);color:#111">Made with 100% premium nylon fiber,</span>
<span class="t" style="left:860.4px;top:635.95px;font:12.4px/1 'Liberation Sans', sans-serif;transform:scaleX(1.0844);color:#111">this textured carpet creates a warm,</span>
<span class="t" style="left:860.4px;top:651.80px;font:12.4px/1 'Liberation Sans', sans-serif;transform:scaleX(1.0882);color:#111">casual atmosphere that invites you to</span>
<span class="t" style="left:860.5px;top:677.66px;font:16.7px/1 'Liberation Sans', sans-serif;transform:scaleX(1.0181);color:#000;-webkit-text-stroke:.55px #000">Carpet</span>
<span class="t" style="left:860.4px;top:699.50px;font:14.3px/1 'Liberation Sans', sans-serif;transform:scaleX(1.0106);color:#1a1a1a">Lush II Frosty Glade</span>
<span class="t" style="left:860.4px;top:722.10px;font:12.4px/1 'Liberation Sans', sans-serif;transform:scaleX(1.0967);color:#111">Made with 100% premium nylon fiber,</span>
<span class="t" style="left:860.4px;top:736.95px;font:12.4px/1 'Liberation Sans', sans-serif;transform:scaleX(1.0844);color:#111">this textured carpet creates a warm,</span>
<span class="t" style="left:860.4px;top:752.80px;font:12.4px/1 'Liberation Sans', sans-serif;transform:scaleX(1.0882);color:#111">casual atmosphere that invites you to</span>
<span class="t" style="left:860.5px;top:778.66px;font:16.7px/1 'Liberation Sans', sans-serif;transform:scaleX(1.0450);color:#000;-webkit-text-stroke:.55px #000">Hardwood</span>
<span class="t" style="left:860.4px;top:800.50px;font:14.3px/1 'Liberation Sans', sans-serif;transform:scaleX(1.0288);color:#1a1a1a">Bolivian Rosewood</span>
<span class="t" style="left:860.4px;top:823.10px;font:12.4px/1 'Liberation Sans', sans-serif;transform:scaleX(1.0698);color:#111">Bolivian Rosewood is an exotic wood</span>
<span class="t" style="left:860.4px;top:837.95px;font:12.4px/1 'Liberation Sans', sans-serif;transform:scaleX(1.1058);color:#111">with beautiful, rosewood like wood with</span>
<!-- overlay -->
<div class="a" style="left:856px;top:355.6px;width:260px;height:10.5px;background:#fff"></div>
<div class="a" style="left:856px;top:456.4px;width:260px;height:10.5px;background:#fff"></div>
<div class="a" style="left:856px;top:557.2px;width:260px;height:10.5px;background:#fff"></div>
<div class="a" style="left:856px;top:658.0px;width:260px;height:10.5px;background:#fff"></div>
<div class="a" style="left:856px;top:758.8px;width:260px;height:10.5px;background:#fff"></div>
<svg width="1918" height="937" viewBox="0 0 1918 937" style="left:0;top:0"><rect x="764" y="363.00" width="384" height="1" fill="#7d86b7"/><rect x="764" y="463.80" width="384" height="1" fill="#7d86b7"/><rect x="764" y="564.60" width="384" height="1" fill="#7d86b7"/><rect x="764" y="665.40" width="384" height="1" fill="#7d86b7"/><rect x="764" y="766.20" width="384" height="1" fill="#7d86b7"/></svg>
<div class="a" style="left:764px;top:851px;width:384px;height:48px;background:#e0e0e0"></div>
</body></html>
